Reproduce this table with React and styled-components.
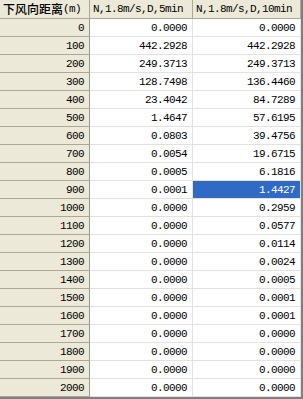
import React from 'react';
import styled, { createGlobalStyle } from 'styled-components';

const GlobalStyle = createGlobalStyle`
  html, body {
    margin: 0;
    padding: 0;
    background: #ffffff;
  }
`;

const Frame = styled.div`
  width: 303px;
  box-sizing: border-box;
  border-right: 2px solid #7f7f7f;
  border-bottom: 2px solid #7f7f7f;
  font-family: "Liberation Mono", "Noto Sans CJK SC", monospace;
  font-size: 11px;
  letter-spacing: -0.6px;
  color: #000;
`;

const Grid = styled.div`
  display: grid;
  grid-template-columns: 90px 103px 108px;
`;

const HeaderCell = styled.div`
  box-sizing: border-box;
  height: 19px;
  padding-left: 3px;
  display: flex;
  align-items: center;
  white-space: nowrap;
  overflow: hidden;
  background: #ece9d8;
  border-right: 1px solid #aca899;
  border-bottom: 1px solid #aca899;
`;

const Cjk = styled.span`
  font-size: 12px;
  letter-spacing: 0;
  font-weight: 500;
`;

const Cell = styled.div`
  box-sizing: border-box;
  height: 18px;
  padding-right: 5px;
  display: flex;
  align-items: center;
  justify-content: flex-end;
  white-space: nowrap;
  background: ${p => (p.$side ? '#ece9d8' : p.$selected ? '#316ac5' : '#ffffff')};
  color: ${p => (p.$selected ? '#ffffff' : '#000000')};
  border-right: 1px solid ${p => (p.$side ? '#9d9a8d' : '#e3e2de')};
  border-bottom: 1px solid ${p => (p.$side ? '#aca899' : '#e3e2de')};
`;

const rows = [
  ['0', '0.0000', '0.0000'],
  ['100', '442.2928', '442.2928'],
  ['200', '249.3713', '249.3713'],
  ['300', '128.7498', '136.4460'],
  ['400', '23.4042', '84.7289'],
  ['500', '1.4647', '57.6195'],
  ['600', '0.0803', '39.4756'],
  ['700', '0.0054', '19.6715'],
  ['800', '0.0005', '6.1816'],
  ['900', '0.0001', '1.4427'],
  ['1000', '0.0000', '0.2959'],
  ['1100', '0.0000', '0.0577'],
  ['1200', '0.0000', '0.0114'],
  ['1300', '0.0000', '0.0024'],
  ['1400', '0.0000', '0.0005'],
  ['1500', '0.0000', '0.0001'],
  ['1600', '0.0000', '0.0001'],
  ['1700', '0.0000', '0.0000'],
  ['1800', '0.0000', '0.0000'],
  ['1900', '0.0000', '0.0000'],
  ['2000', '0.0000', '0.0000'],
];

export default function App() {
  return (
    <>
      <GlobalStyle />
      <Frame>
        <Grid>
          <HeaderCell><Cjk>下风向距离</Cjk>(m)</HeaderCell>
          <HeaderCell>N,1.8m/s,D,5min</HeaderCell>
          <HeaderCell>N,1.8m/s,D,10min</HeaderCell>
          {rows.map(([dist, a, b]) => (
            <React.Fragment key={dist}>
              <Cell $side>{dist}</Cell>
              <Cell>{a}</Cell>
              <Cell $selected={dist === '900'}>{b}</Cell>
            </React.Fragment>
          ))}
        </Grid>
      </Frame>
    </>
  );
}
